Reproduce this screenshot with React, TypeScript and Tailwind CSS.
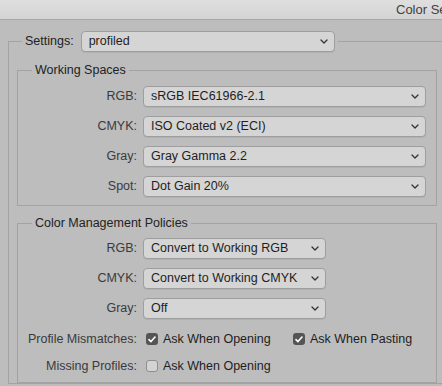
import React from 'react';

const Chevron = () => (
    <svg width="8" height="5" viewBox="0 0 8 5" className="shrink-0">
        <path d="M1 1l3 3 3-3" fill="none" stroke="#333" strokeWidth="1.3" strokeLinecap="round" strokeLinejoin="round" />
    </svg>
);

const Select: React.FC<{ value: string; className?: string }> = ({ value, className = '' }) => (
    <div className={`flex h-[21px] items-center justify-between rounded-[4px] border border-[#9e9e9e] bg-[#d5d5d5] pl-[7px] pr-[6px] text-[#1e1e1e] shadow-[0_1px_0_rgba(0,0,0,0.06)] ${className}`}>
        <span className="whitespace-nowrap">{value}</span>
        <Chevron />
    </div>
);

const Checkbox: React.FC<{ checked?: boolean }> = ({ checked }) =>
    checked ? (
        <span className="flex h-[12px] w-[12px] shrink-0 items-center justify-center rounded-[3px] bg-[#555]">
            <svg width="8" height="7" viewBox="0 0 8 7">
                <path d="M1 3.6l2 2 4-4.6" fill="none" stroke="#fff" strokeWidth="1.6" strokeLinecap="round" strokeLinejoin="round" />
            </svg>
        </span>
    ) : (
        <span className="h-[12px] w-[12px] shrink-0 rounded-[3px] border border-[#8e8e8e] bg-[#d3d3d3]" />
    );

const Row: React.FC<{ label: string; value: string; width: string; className?: string }> = ({ label, value, width, className = '' }) => (
    <div className={`flex items-center ${className}`}>
        <span className="w-[119px] text-right text-[#3a3a3a]">{label}</span>
        <Select value={value} className={`ml-[6px] ${width}`} />
    </div>
);

export default function App() {
    return (
        <div className="h-[386px] w-[442px] overflow-hidden bg-[#bdbdbd] text-[12.5px] font-['Liberation_Sans',sans-serif]">
            {/* Title bar */}
            <div className="h-[20px] border-b border-[#a7a7a7] bg-gradient-to-b from-[#dfdfdf] to-[#d3d3d3] pl-[396px] text-[13px] leading-[19px] whitespace-nowrap text-[#404040]">
                Color Settings
            </div>

            <fieldset className="mt-[11px] ml-[8px] w-[480px] border border-[#a3a3a3]">
                <legend className="ml-[13px] flex items-center px-[3px] text-[#222]">
                    <span>Settings:</span>
                    <Select value="profiled" className="ml-[7px] w-[254px]" />
                </legend>

                <div className="pt-[10px] pl-[8px]">
                    <fieldset className="w-[420px] border border-[#a3a3a3]">
                        <legend className="ml-[14px] px-[3px] leading-4 text-[#222]">Working Spaces</legend>
                        <div className="flex flex-col gap-[9px] pt-[8px] pb-[8px]">
                            <Row label="RGB:" value="sRGB IEC61966-2.1" width="w-[283px]" />
                            <Row label="CMYK:" value="ISO Coated v2 (ECI)" width="w-[283px]" />
                            <Row label="Gray:" value="Gray Gamma 2.2" width="w-[283px]" />
                            <Row label="Spot:" value="Dot Gain 20%" width="w-[283px]" />
                        </div>
                    </fieldset>

                    <fieldset className="mt-[9px] w-[420px] border border-[#a3a3a3]">
                        <legend className="ml-[14px] px-[3px] leading-4 text-[#222]">Color Management Policies</legend>
                        <div className="flex flex-col pt-[7px] pb-[6px]">
                            <Row label="RGB:" value="Convert to Working RGB" width="w-[183px]" />
                            <Row label="CMYK:" value="Convert to Working CMYK" width="w-[183px]" className="mt-[9px]" />
                            <Row label="Gray:" value="Off" width="w-[183px]" className="mt-[9px]" />
                            <div className="mt-[10px] flex h-[20px] items-center">
                                <span className="w-[119px] text-right text-[#3a3a3a]">Profile Mismatches:</span>
                                <span className="ml-[9px] flex w-[147px] items-center gap-[5px] text-[#1e1e1e]">
                                    <Checkbox checked />
                                    Ask When Opening
                                </span>
                                <span className="flex items-center gap-[5px] text-[#1e1e1e]">
                                    <Checkbox checked />
                                    Ask When Pasting
                                </span>
                            </div>
                            <div className="mt-[7px] flex h-[20px] items-center">
                                <span className="w-[119px] text-right text-[#3a3a3a]">Missing Profiles:</span>
                                <span className="ml-[9px] flex items-center gap-[5px] text-[#1e1e1e]">
                                    <Checkbox />
                                    Ask When Opening
                                </span>
                            </div>
                        </div>
                    </fieldset>
                </div>
            </fieldset>
        </div>
    );
}
